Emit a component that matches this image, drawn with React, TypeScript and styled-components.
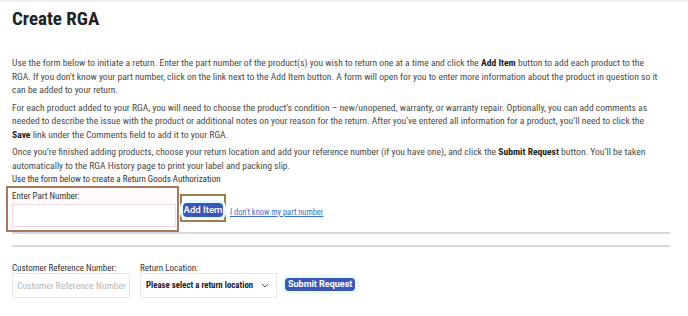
import React from "react";
import styled, { createGlobalStyle } from "styled-components";

const GlobalStyle = createGlobalStyle`
  html, body {
    margin: 0;
    padding: 0;
    background: #ffffff;
  }
  body {
    font-family: "Roboto Condensed", "Liberation Sans Narrow", "Roboto", sans-serif;
    color: #444;
  }
`;

const Page = styled.div`
  width: 688px;
  height: 316px;
  box-sizing: border-box;
  border-top: 2px solid #f1f1f1;
  padding: 0 12px;
  overflow: hidden;
`;

const Title = styled.h1`
  margin: 5px 0 0;
  font-size: 19px;
  line-height: 24px;
  font-weight: 700;
  color: #222;
`;

const Intro = styled.div`
  margin-top: 25px;
  width: 650px;
`;

const Para = styled.p`
  margin: 0 0 3.5px;
  font-size: 9.6px;
  line-height: 13.7px;
  color: #4a4a4a;

  &:last-child {
    margin-bottom: 0;
  }

  b {
    color: #222;
  }
`;

const FormCaption = styled.div`
  font-size: 9px;
  line-height: 12px;
  color: #333;
`;

const PartRow = styled.div`
  display: flex;
  align-items: center;
  margin-top: 1px;
  margin-left: -6px;
`;

const Highlight = styled.div<{ $color: string }>`
  border: 2px solid ${(p) => p.$color};
  box-sizing: border-box;
`;

const PartBox = styled(Highlight)`
  width: 173px;
  height: 46px;
  padding: 2px 2px 0 4px;
  background: #fffafc;
`;

const FieldLabel = styled.label`
  display: block;
  font-size: 9px;
  line-height: 12px;
  color: #333;
  white-space: nowrap;
`;

const PartInput = styled.input`
  display: block;
  box-sizing: border-box;
  width: 164px;
  height: 23px;
  margin-top: 2px;
  border: 1px solid #f2dbe6;
  background: #fff;
  outline: none;
`;

const ButtonBox = styled(Highlight)`
  margin-left: 1px;
  margin-top: -2px;
  padding: 7px 1px 3px 1px;
`;

const BlueButton = styled.button`
  display: block;
  border: none;
  border-radius: 4px;
  background: #3c56b8;
  color: #fff;
  font-family: "Roboto", "Liberation Sans", sans-serif;
  font-weight: 500;
  cursor: pointer;
  box-shadow: 0 0 0 3px #e6fbfd;
`;

const AddButton = styled(BlueButton)`
  width: 40px;
  height: 14px;
  padding: 0;
  font-size: 9.6px;
  line-height: 14px;
`;

const HelpLink = styled.a`
  margin-left: 4px;
  margin-top: 6px;
  font-size: 8.4px;
  color: #3d6fcb;
  text-decoration: underline;
  white-space: nowrap;
`;

const Rule = styled.hr<{ $gap: number }>`
  display: block;
  width: 658px;
  height: 0;
  margin: ${(p) => p.$gap}px 0 0;
  border: none;
  border-top: 2px solid #d9d9d9;
`;

const BottomRow = styled.div`
  display: flex;
  align-items: flex-end;
  gap: 10px;
  margin-top: 16px;
`;

const Field = styled.div`
  display: flex;
  flex-direction: column;

  ${FieldLabel} {
    line-height: 10px;
  }
`;

const RefInput = styled.input`
  box-sizing: border-box;
  width: 118px;
  height: 25px;
  padding: 0 2px 0 4px;
  border: 1px solid #e8e8e8;
  font-family: "Roboto Condensed", "Roboto", sans-serif;
  font-size: 9.6px;
  outline: none;

  &::placeholder {
    color: #b8b8b8;
  }
`;

const SelectBox = styled.div`
  box-sizing: border-box;
  width: 137px;
  height: 25px;
  padding: 0 7px 0 5px;
  border: 1px solid #e8e8e8;
  display: flex;
  align-items: center;
  justify-content: space-between;
  font-size: 8.8px;
  font-weight: 700;
  color: #222;
  white-space: nowrap;
`;

const SubmitButton = styled(BlueButton)`
  height: 13px;
  margin: 0 0 7px -2px;
  padding: 0 3px;
  font-size: 9px;
  line-height: 13px;
  font-weight: 700;
`;

export default function App() {
  return (
    <>
      <GlobalStyle />
      <Page>
        <Title>Create RGA</Title>
        <Intro>
          <Para>
            Use the form below to initiate a return. Enter the part number of the product(s) you wish to
            return one at a time and click the <b>Add Item</b> button to add each product to the RGA. If you
            don't know your part number, click on the link next to the Add Item button. A form will open for
            you to enter more information about the product in question so it can be added to your return.
          </Para>
          <Para>
            For each product added to your RGA, you will need to choose the product’s condition – new/unopened,
            warranty, or warranty repair. Optionally, you can add comments as needed to describe the issue with
            the product or additional notes on your reason for the return. After you’ve entered all information
            for a product, you’ll need to click the <b>Save</b> link under the Comments field to add it to your RGA.
          </Para>
          <Para>
            Once you’re finished adding products, choose your return location and add your reference number (if
            you have one), and click the <b>Submit Request</b> button. You’ll be taken automatically to the RGA
            History page to print your label and packing slip.
          </Para>
        </Intro>
        <FormCaption>Use the form below to create a Return Goods Authorization</FormCaption>
        <PartRow>
          <PartBox $color="#a8795f">
            <FieldLabel>Enter Part Number:</FieldLabel>
            <PartInput type="text" />
          </PartBox>
          <ButtonBox $color="#9d7d4f">
            <AddButton type="button">Add Item</AddButton>
          </ButtonBox>
          <HelpLink href="#">I don't know my part number</HelpLink>
        </PartRow>
        <Rule $gap={0} />
        <Rule $gap={11} />
        <BottomRow>
          <Field>
            <FieldLabel>Customer Reference Number:</FieldLabel>
            <RefInput type="text" placeholder="Customer Reference Number" />
          </Field>
          <Field>
            <FieldLabel>Return Location:</FieldLabel>
            <SelectBox>
              <span>Please select a return location</span>
              <svg width="8" height="5" viewBox="0 0 8 5" fill="none">
                <path d="M1 1l3 3 3-3" stroke="#555" strokeWidth="1" />
              </svg>
            </SelectBox>
          </Field>
          <SubmitButton type="button">Submit Request</SubmitButton>
        </BottomRow>
      </Page>
    </>
  );
}
